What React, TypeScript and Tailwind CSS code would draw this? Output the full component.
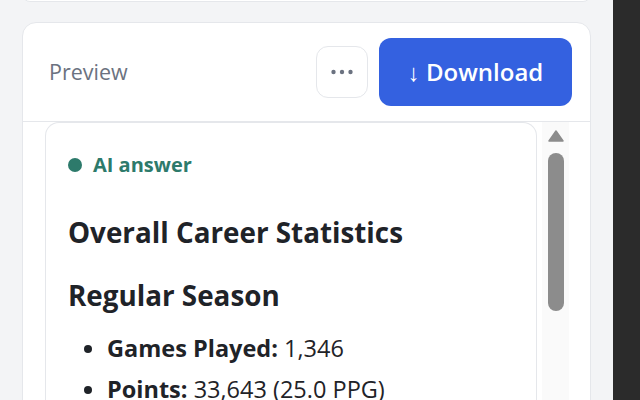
const stats = [
  { label: "Games Played:", value: "1,346" },
  { label: "Points:", value: "33,643 (25.0 PPG)" },
];

export default function App() {
  return (
    <div className="flex h-[400px] w-[640px] overflow-hidden bg-[#f3f4f6] font-['Open_Sans',sans-serif] text-[#1f2328]">
      <div className="flex flex-1 flex-col px-[22px]">
        {/* bottom of the previous card */}
        <div className="-mt-[14px] h-[16px] shrink-0 rounded-[14px] border border-[#e5e7eb] bg-white" />

        <div className="mt-[20px] flex h-[420px] shrink-0 flex-col rounded-[14px] border border-[#e5e7eb] bg-white">
          <div className="flex h-[99px] shrink-0 items-center justify-between border-b border-[#e5e7eb] pl-[26px] pr-[18px]">
            <span className="text-[21.5px] text-[#6b7280]">Preview</span>
            <div className="flex items-center gap-[11px]">
              <button className="flex h-[52px] w-[52px] items-center justify-center rounded-[12px] border border-[#e5e7eb]">
                <svg width="22" height="6" viewBox="0 0 22 6" className="text-[#6b7280]">
                  <circle cx="2.5" cy="3" r="2.2" fill="currentColor" />
                  <circle cx="11" cy="3" r="2.2" fill="currentColor" />
                  <circle cx="19.5" cy="3" r="2.2" fill="currentColor" />
                </svg>
              </button>
              <button className="flex h-[68px] w-[193px] items-center justify-center rounded-[12px] bg-[#3461e0] text-[24px] font-semibold text-white">
                ↓ Download
              </button>
            </div>
          </div>

          <div className="flex flex-1 pl-[22px] pr-[21px]">
            <div className="flex-1 rounded-t-[14px] border border-b-0 border-[#e5e7eb] px-[22px] pt-[28px]">
              <div className="flex h-[28px] items-center gap-[11px] text-[20px] font-bold text-[#2d7a6b]">
                <span className="h-[14px] w-[14px] rounded-full bg-[#2d7a6b]" />
                AI answer
              </div>
              <h2 className="mt-[37px] text-[27.8px] font-bold leading-[32px]">
                Overall Career Statistics
              </h2>
              <h3 className="mt-[31px] text-[27.8px] font-bold leading-[32px]">Regular Season</h3>
              <ul className="mt-[21px] flex list-disc flex-col gap-[9px] pl-[39px] text-[23.5px] leading-[32px]">
                {stats.map((s) => (
                  <li key={s.label}>
                    <b className="font-bold">{s.label}</b> {s.value}
                  </li>
                ))}
              </ul>
            </div>

            {/* scrollbar */}
            <div className="ml-[5px] flex w-[27px] flex-col items-center bg-[#fafafa] pt-[8px]">
              <svg width="16" height="12" viewBox="0 0 16 12" className="text-[#8c8c8c]">
                <path d="M8 1 L15 11 H1 Z" fill="currentColor" strokeLinejoin="round" stroke="currentColor" strokeWidth="1.5" />
              </svg>
              <div className="mt-[11px] h-[158px] w-[16px] rounded-full bg-[#8c8c8c]" />
            </div>
          </div>
        </div>
      </div>
      <div className="w-[27px] shrink-0 bg-[#2b2b2b]" />
    </div>
  );
}
